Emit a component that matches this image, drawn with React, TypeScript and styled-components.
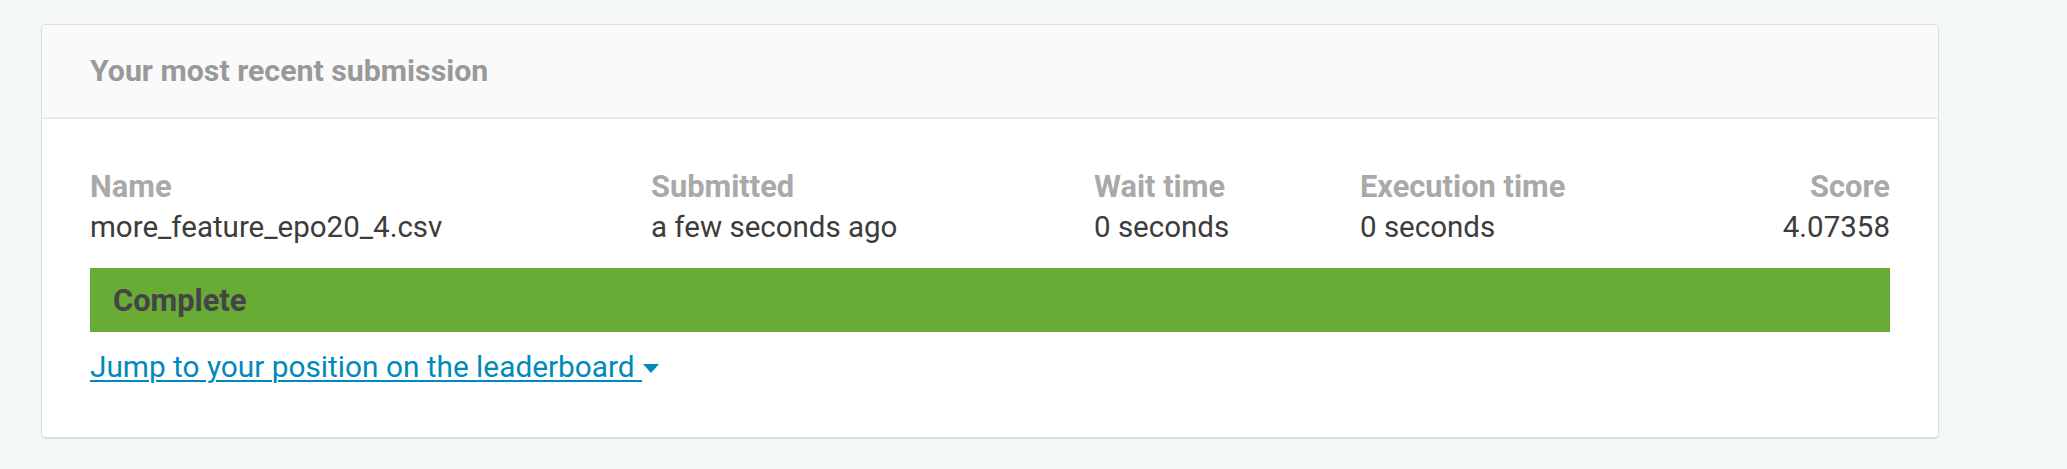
import React from "react";
import styled, { createGlobalStyle } from "styled-components";

const GlobalStyle = createGlobalStyle`
  html, body {
    margin: 0;
    padding: 0;
    background: #f4f7f8;
    font-family: Roboto, "Liberation Sans", sans-serif;
  }
`;

const Page = styled.div`
  padding: 24px 0 0 41px;
  width: 1898px;
`;

const Card = styled.section`
  background: #ffffff;
  border: 1px solid #dcdddd;
  border-bottom-width: 2px;
  border-radius: 5px;
  overflow: hidden;
`;

const CardHeader = styled.header`
  background: #fafafa;
  border-bottom: 2px solid #ebebeb;
  padding: 26px 48px 26px;
`;

const Title = styled.h2`
  margin: 0;
  font-size: 30.3px;
  line-height: 40px;
  font-weight: 700;
  color: #999999;
`;

const CardBody = styled.div`
  padding: 47px 48px 50px;
`;

const Stats = styled.div`
  display: grid;
  grid-template-columns: 561px 443px 266px 1fr auto;
`;

const Stat = styled.div<{ $align?: "left" | "right" }>`
  display: flex;
  flex-direction: column;
  text-align: ${(p) => p.$align ?? "left"};
`;

const Label = styled.span`
  font-size: 30.8px;
  line-height: 41px;
  font-weight: 700;
  color: #a9a9a9;
`;

const Value = styled.span`
  font-size: 29.5px;
  line-height: 40px;
  font-weight: 400;
  color: #3c3c3c;
`;

const StatusBar = styled.div`
  margin-top: 21px;
  height: 64px;
  background: #68ab35;
  display: flex;
  align-items: center;
  padding: 0 23px;
  font-size: 30.8px;
  font-weight: 700;
  color: #444449;
`;

const JumpLink = styled.a`
  display: inline-flex;
  align-items: center;
  margin-top: 15px;
  font-size: 29.8px;
  line-height: 40px;
  color: #008abc;
  text-decoration: underline;
  text-decoration-thickness: 2px;
  text-underline-offset: 3px;
  cursor: pointer;
  white-space: pre;
`;

const Caret = styled.svg`
  width: 16px;
  height: 9px;
  margin-left: 1px;
  margin-top: 2px;
  fill: #008abc;
`;

const stats = [
  { label: "Name", value: "more_feature_epo20_4.csv" },
  { label: "Submitted", value: "a few seconds ago" },
  { label: "Wait time", value: "0 seconds" },
  { label: "Execution time", value: "0 seconds" },
  { label: "Score", value: "4.07358", align: "right" as const },
];

export default function App() {
  return (
    <>
      <GlobalStyle />
      <Page>
        <Card>
          <CardHeader>
            <Title>Your most recent submission</Title>
          </CardHeader>
          <CardBody>
            <Stats>
              {stats.map((s) => (
                <Stat key={s.label} $align={s.align}>
                  <Label>{s.label}</Label>
                  <Value>{s.value}</Value>
                </Stat>
              ))}
            </Stats>
            <StatusBar>Complete</StatusBar>
            <JumpLink>
              {"Jump to your position on the leaderboard "}
              <Caret viewBox="0 0 16 9">
                <polygon points="0,0 16,0 8,9" />
              </Caret>
            </JumpLink>
          </CardBody>
        </Card>
      </Page>
    </>
  );
}
